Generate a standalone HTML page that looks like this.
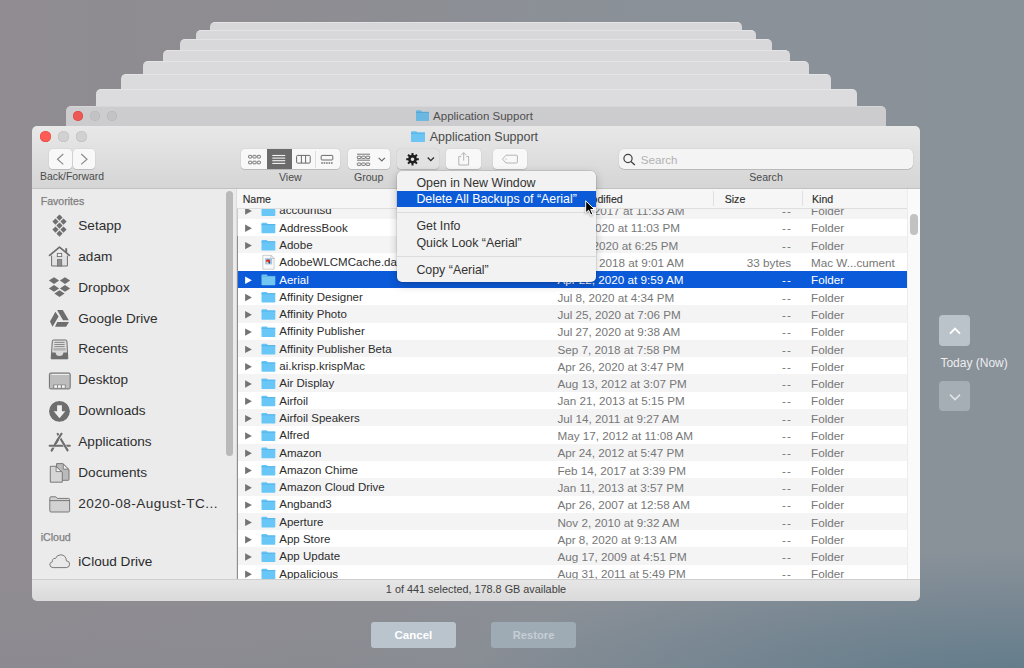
<!DOCTYPE html><html><head><meta charset="utf-8"><style>
*{box-sizing:border-box;margin:0;padding:0}
html,body{width:1024px;height:668px;overflow:hidden}
body{position:relative;font-family:"Liberation Sans",sans-serif;
background:linear-gradient(90deg,#908c91 0%,#8e8d92 30%,#8b9097 55%,#8a9199 75%,#899199 100%);}
.a{position:absolute}
.t{position:absolute;line-height:1;white-space:nowrap}
svg{overflow:visible}
.layer{position:absolute;border-radius:5px 5px 0 0;height:130px;border-top:1px solid #e4e4e6}
.tl{position:absolute;border-radius:50%}
.btn{position:absolute;background:#f8f8f8;border-radius:3.5px;box-shadow:0 0.5px 0.5px rgba(0,0,0,.25),0 0 0 0.5px rgba(0,0,0,.06)}
</style></head><body>
<div class="a" style="left:0;top:0;width:1024px;height:668px;background:radial-gradient(ellipse 560px 140px at 1024px 690px,rgba(88,118,135,.85),rgba(88,118,135,0)),linear-gradient(180deg,rgba(120,130,140,0) 580px,rgba(110,125,138,.12) 668px)"></div>
<div class="layer" style="left:210px;top:22px;width:532px;background:#d7d7d9"></div>
<div class="layer" style="left:196px;top:30px;width:560px;background:#d8d8da"></div>
<div class="layer" style="left:180px;top:39px;width:592px;background:#d8d8da"></div>
<div class="layer" style="left:163px;top:49.5px;width:627px;background:#d9d9db"></div>
<div class="layer" style="left:143px;top:61px;width:666px;background:#dadadc"></div>
<div class="layer" style="left:121px;top:74px;width:710px;background:#dbdbdd"></div>
<div class="layer" style="left:96px;top:89px;width:761px;background:#dcdcde"></div>
<div class="layer" style="left:66px;top:106px;width:820px;background:linear-gradient(#cdcdcf,#c6c6c8);border-top:1px solid #d6d6d8"></div>
<div class="tl" style="left:73.0px;top:110.5px;width:10px;height:10px;background:#ec5853;box-shadow:inset 0 0 0 0.5px #d9443f"></div>
<div class="tl" style="left:90.0px;top:110.5px;width:10px;height:10px;background:#c3c3c5;box-shadow:inset 0 0 0 0.5px #b5b5b7"></div>
<div class="tl" style="left:107.0px;top:110.5px;width:10px;height:10px;background:#c3c3c5;box-shadow:inset 0 0 0 0.5px #b5b5b7"></div>
<svg class="a" style="left:400px;top:100px" width="40" height="50" viewBox="400 100 40 50"><path d="M416,111.89999999999999 Q416,110.6 416.9,110.6 H420.94 L422.04,111.89999999999999 H428.4 Q429,111.89999999999999 429,112.6 V120.1 Q429,120.8 428.3,120.8 H416.7 Q416,120.8 416,120.1 Z" fill="#6ab8e2"/><rect x="416" y="111.89999999999999" width="13" height="1.1" fill="#5aa7d4"/><path d="M411,132.60000000000002 Q411,131.3 411.9,131.3 H416.32 L417.42,132.60000000000002 H424.4 Q425,132.60000000000002 425,133.3 V141.20000000000002 Q425,141.9 424.3,141.9 H411.7 Q411,141.9 411,141.20000000000002 Z" fill="#6cc5f3"/><rect x="411" y="132.60000000000002" width="14" height="1.1" fill="#58b3e6"/></svg>
<div class="a" style="left:32.00px;top:126.00px;width:888.00px;height:62.00px;border-radius:5px 5px 0 0;background:linear-gradient(#e8e8e8,#d5d5d5);"></div>
<div class="a" style="left:32.00px;top:187.50px;width:888.00px;height:1.00px;background:#c2c2c2;"></div>
<div class="tl" style="left:39.5px;top:131.0px;width:11px;height:11px;background:#fd5d56;box-shadow:inset 0 0 0 0.5px #e2463f"></div>
<div class="tl" style="left:57.5px;top:131.0px;width:11px;height:11px;background:#d1d1d1;box-shadow:inset 0 0 0 0.5px #bdbdbd"></div>
<div class="tl" style="left:75.5px;top:131.0px;width:11px;height:11px;background:#d1d1d1;box-shadow:inset 0 0 0 0.5px #bdbdbd"></div>
<div class="t" style="left:429.70px;top:131.22px;font-size:12.5px;color:#4a4a4a;">Application Support</div>
<div class="t" style="left:433.10px;top:111.16px;font-size:11.5px;color:#4e4e4e;">Application Support</div>
<svg class="a" style="left:400px;top:100px" width="40" height="50" viewBox="400 100 40 50"><path d="M416,111.89999999999999 Q416,110.6 416.9,110.6 H420.94 L422.04,111.89999999999999 H428.4 Q429,111.89999999999999 429,112.6 V120.1 Q429,120.8 428.3,120.8 H416.7 Q416,120.8 416,120.1 Z" fill="#6ab8e2"/><rect x="416" y="111.89999999999999" width="13" height="1.1" fill="#5aa7d4"/><path d="M411,132.60000000000002 Q411,131.3 411.9,131.3 H416.32 L417.42,132.60000000000002 H424.4 Q425,132.60000000000002 425,133.3 V141.20000000000002 Q425,141.9 424.3,141.9 H411.7 Q411,141.9 411,141.20000000000002 Z" fill="#6cc5f3"/><rect x="411" y="132.60000000000002" width="14" height="1.1" fill="#58b3e6"/></svg>
<div class="btn" style="left:49.2px;top:149.3px;width:22.4px;height:19.8px"></div>
<div class="btn" style="left:73.1px;top:149.3px;width:21.9px;height:19.8px"></div>
<div class="t" style="left:40.00px;top:172.29px;font-size:10.4px;color:#4b4b4b;">Back/Forward</div>
<div class="btn" style="left:241px;top:149.2px;width:99.4px;height:20px"></div>
<div class="a" style="left:267.20px;top:149.20px;width:24.40px;height:20.00px;background:#6b6b6b;"></div>
<div class="a" style="left:315.20px;top:150.50px;width:0.60px;height:17.50px;background:#dedede;"></div>
<div class="t" style="left:90.40px;width:400px;text-align:center;top:172.02px;font-size:10.6px;color:#4b4b4b;">View</div>
<div class="btn" style="left:348px;top:149.2px;width:41.9px;height:19.8px"></div>
<div class="t" style="left:168.70px;width:400px;text-align:center;top:172.02px;font-size:10.6px;color:#4b4b4b;">Group</div>
<div class="btn" style="left:397.3px;top:149.2px;width:41.7px;height:19.8px;background:#e2e2e2"></div>
<div class="btn" style="left:446.3px;top:149.4px;width:34.5px;height:19.5px"></div>
<div class="btn" style="left:492.9px;top:149.4px;width:34px;height:19.5px"></div>
<div class="btn" style="left:618.7px;top:149.3px;width:294.3px;height:20px;border-radius:5px;background:#f4f4f4"></div>
<div class="t" style="left:640.80px;top:153.78px;font-size:11.6px;color:#b2b2b2;">Search</div>
<div class="t" style="left:566.00px;width:400px;text-align:center;top:172.02px;font-size:10.6px;color:#4b4b4b;">Search</div>
<svg class="a" style="left:40px;top:145px" width="600" height="30" viewBox="40 145 600 30"><path d="M63.3,154 L57.5,159.2 L63.3,164.4" fill="none" stroke="#8c8c8c" stroke-width="1.2"/><path d="M81.2,154 L87,159.2 L81.2,164.4" fill="none" stroke="#8c8c8c" stroke-width="1.2"/><rect x="248.60" y="155.40" width="3.2" height="2.6" rx="0.6" fill="none" stroke="#6a6a6a" stroke-width="0.9"/><rect x="252.90" y="155.40" width="3.2" height="2.6" rx="0.6" fill="none" stroke="#6a6a6a" stroke-width="0.9"/><rect x="257.20" y="155.40" width="3.2" height="2.6" rx="0.6" fill="none" stroke="#6a6a6a" stroke-width="0.9"/><rect x="248.60" y="161.20" width="3.2" height="2.6" rx="0.6" fill="none" stroke="#6a6a6a" stroke-width="0.9"/><rect x="252.90" y="161.20" width="3.2" height="2.6" rx="0.6" fill="none" stroke="#6a6a6a" stroke-width="0.9"/><rect x="257.20" y="161.20" width="3.2" height="2.6" rx="0.6" fill="none" stroke="#6a6a6a" stroke-width="0.9"/><rect x="272.3" y="154.95" width="12.9" height="1.1" fill="#f4f4f4"/><rect x="272.3" y="157.55" width="12.9" height="1.1" fill="#f4f4f4"/><rect x="272.3" y="160.15" width="12.9" height="1.1" fill="#f4f4f4"/><rect x="272.3" y="162.85" width="12.9" height="1.1" fill="#f4f4f4"/><rect x="296.6" y="155.4" width="13.6" height="7.7" rx="1" fill="none" stroke="#6a6a6a" stroke-width="1"/><path d="M301.4,155.4 V163.1 M305.6,155.4 V163.1" stroke="#6a6a6a" stroke-width="1"/><rect x="321.2" y="155.4" width="11.6" height="4.6" rx="0.8" fill="none" stroke="#6a6a6a" stroke-width="1"/><rect x="321.20" y="162.3" width="1.6" height="1.4" fill="#6a6a6a"/><rect x="323.65" y="162.3" width="1.6" height="1.4" fill="#6a6a6a"/><rect x="326.10" y="162.3" width="1.6" height="1.4" fill="#6a6a6a"/><rect x="328.55" y="162.3" width="1.6" height="1.4" fill="#6a6a6a"/><rect x="331.00" y="162.3" width="1.6" height="1.4" fill="#6a6a6a"/><path d="M357,154.2 H370 M357,160.2 H370" stroke="#6a6a6a" stroke-width="0.9"/><rect x="357.30" y="156.20" width="3.6" height="2.4" rx="0.6" fill="none" stroke="#6a6a6a" stroke-width="0.9"/><rect x="361.70" y="156.20" width="3.6" height="2.4" rx="0.6" fill="none" stroke="#6a6a6a" stroke-width="0.9"/><rect x="366.10" y="156.20" width="3.6" height="2.4" rx="0.6" fill="none" stroke="#6a6a6a" stroke-width="0.9"/><rect x="357.30" y="163.00" width="3.6" height="2.4" rx="0.6" fill="none" stroke="#6a6a6a" stroke-width="0.9"/><rect x="361.70" y="163.00" width="3.6" height="2.4" rx="0.6" fill="none" stroke="#6a6a6a" stroke-width="0.9"/><rect x="366.10" y="163.00" width="3.6" height="2.4" rx="0.6" fill="none" stroke="#6a6a6a" stroke-width="0.9"/><path d="M378.7,157.9 L381.8,161 L384.9,157.9" fill="none" stroke="#6a6a6a" stroke-width="1.2"/><path d="M415.50,159.20 L418.80,159.20 M414.62,161.32 L416.95,163.65 M412.50,162.20 L412.50,165.50 M410.38,161.32 L408.05,163.65 M409.50,159.20 L406.20,159.20 M410.38,157.08 L408.05,154.75 M412.50,156.20 L412.50,152.90 M414.62,157.08 L416.95,154.75 " stroke="#1f1f1f" stroke-width="2.0"/><circle cx="412.5" cy="159.2" r="3.1" fill="none" stroke="#1f1f1f" stroke-width="2.6"/><path d="M427.7,157.5 L430.8,160.6 L433.9,157.5" fill="none" stroke="#2a2a2a" stroke-width="1.3"/><path d="M461.2,156.4 H458.8 V165 H468.6 V156.4 H466.2" fill="none" stroke="#b4b4b4" stroke-width="1"/><path d="M463.7,152.6 V160.6 M461.3,155 L463.7,152.6 L466.1,155" fill="none" stroke="#b4b4b4" stroke-width="1"/><path d="M506,155.2 H516.6 Q517.4,155.2 517.4,156 V162.2 Q517.4,163 516.6,163 H506 L502.5,159.1 Z" fill="none" stroke="#b4b4b4" stroke-width="1"/><circle cx="506" cy="159.1" r="0.7" fill="#b4b4b4"/><circle cx="628" cy="158.5" r="4.1" fill="none" stroke="#404040" stroke-width="1.2"/><path d="M631,161.6 L634.8,165" stroke="#404040" stroke-width="1.3"/></svg>
<div class="a" style="left:32.00px;top:188.50px;width:205.00px;height:390.50px;background:#ebebeb;"></div>
<div class="a" style="left:236.00px;top:188.50px;width:1.00px;height:390.50px;background:#dcdcdc;"></div>
<div class="a" style="left:225.80px;top:191.40px;width:7.00px;height:264.60px;background:#b9b9b9;border-radius:4px;"></div>
<div class="t" style="left:40.70px;top:196.42px;font-size:10.6px;color:#7f7f7f;-webkit-text-stroke:0.25px #7f7f7f;">Favorites</div>
<div class="t" style="left:78.30px;top:218.78px;font-size:13.6px;color:#2e2e2e;">Setapp</div>
<div class="t" style="left:78.30px;top:249.70px;font-size:13.6px;color:#2e2e2e;">adam</div>
<div class="t" style="left:78.30px;top:280.62px;font-size:13.6px;color:#2e2e2e;">Dropbox</div>
<div class="t" style="left:78.30px;top:311.54px;font-size:13.6px;color:#2e2e2e;">Google Drive</div>
<div class="t" style="left:78.30px;top:342.46px;font-size:13.6px;color:#2e2e2e;">Recents</div>
<div class="t" style="left:78.30px;top:373.38px;font-size:13.6px;color:#2e2e2e;">Desktop</div>
<div class="t" style="left:78.30px;top:404.30px;font-size:13.6px;color:#2e2e2e;">Downloads</div>
<div class="t" style="left:78.30px;top:435.22px;font-size:13.6px;color:#2e2e2e;">Applications</div>
<div class="t" style="left:78.30px;top:466.14px;font-size:13.6px;color:#2e2e2e;">Documents</div>
<div class="t" style="left:78.30px;top:497.06px;font-size:13.6px;color:#2e2e2e;letter-spacing:0.45px;">2020-08-August-TC...</div>
<div class="t" style="left:40.70px;top:532.22px;font-size:10.6px;color:#7f7f7f;-webkit-text-stroke:0.25px #7f7f7f;">iCloud</div>
<div class="t" style="left:78.30px;top:554.68px;font-size:13.6px;color:#2a2a2a;">iCloud Drive</div>
<svg class="a" style="left:40px;top:200px" width="40" height="380" viewBox="40 200 40 380"><path d="M59.5,214.5 L62.6,217.6 L59.5,220.7 L56.4,217.6 Z" fill="#6e6e6e"/><path d="M55.5,218.5 L58.6,221.6 L55.5,224.7 L52.4,221.6 Z" fill="#6e6e6e"/><path d="M63.5,218.5 L66.6,221.6 L63.5,224.7 L60.4,221.6 Z" fill="#6e6e6e"/><path d="M59.5,222.5 L62.6,225.6 L59.5,228.7 L56.4,225.6 Z" fill="#6e6e6e"/><path d="M55.5,226.5 L58.6,229.6 L55.5,232.7 L52.4,229.6 Z" fill="#6e6e6e"/><path d="M63.5,226.5 L66.6,229.6 L63.5,232.7 L60.4,229.6 Z" fill="#6e6e6e"/><path d="M59.5,230.5 L62.6,233.6 L59.5,236.7 L56.4,233.6 Z" fill="#6e6e6e"/><path d="M51.6,255.6 V266 H67.4 V255.6" fill="#e2e2e2" stroke="#6e6e6e" stroke-width="1"/><path d="M49.6,255.4 L59.5,247.2 L69.4,255.4" fill="none" stroke="#6e6e6e" stroke-width="1.7" stroke-linejoin="round" stroke-linecap="round"/><path d="M66.2,248.2 V252.4" stroke="#6e6e6e" stroke-width="1.9"/><rect x="57.4" y="259.6" width="4.3" height="6.4" fill="#8e8e8e" stroke="#6e6e6e" stroke-width="0.8"/><rect x="57.3" y="253.4" width="4.4" height="3.2" fill="#f2f2f2" stroke="#6e6e6e" stroke-width="0.9"/><path d="M54.0,277.20000000000005 L59.1,280.6 L54.0,284.0 L48.9,280.6 Z" fill="#6e6e6e"/><path d="M65.0,277.20000000000005 L70.1,280.6 L65.0,284.0 L59.9,280.6 Z" fill="#6e6e6e"/><path d="M54.0,285.0 L59.1,288.4 L54.0,291.79999999999995 L48.9,288.4 Z" fill="#6e6e6e"/><path d="M65.0,285.0 L70.1,288.4 L65.0,291.79999999999995 L59.9,288.4 Z" fill="#6e6e6e"/><path d="M59.5,290.20000000000005 L64.6,293.6 L59.5,297.0 L54.4,293.6 Z" fill="#6e6e6e"/><path d="M57.1,309.9 H62.8 L68.8,320.3 H63 Z" fill="#6e6e6e"/><path d="M55.4,311.75 L58.6,316.6 L52.5,326.8 L50,321.6 Z" fill="#6e6e6e"/><path d="M57.3,322 H69 L66.1,326.8 H55 Z" fill="#6e6e6e"/><path d="M53.4,340 H65.8 Q66.8,340 66.9,341 L67.8,358.8 H51.2 L52.3,341 Q52.4,340 53.4,340 Z" fill="#dcdcdc" stroke="#6e6e6e" stroke-width="1"/><path d="M54.4,342.4 H64.6" stroke="#6e6e6e" stroke-width="0.75"/><path d="M54.4,344.5 H64.6" stroke="#6e6e6e" stroke-width="0.75"/><path d="M54.4,346.6 H64.6" stroke="#6e6e6e" stroke-width="0.75"/><rect x="53.4" y="348" width="12.2" height="2.6" fill="#b4b4b4"/><path d="M51.2,352.5 H55.6 Q55.9,356.1 59.5,356.1 Q63.1,356.1 63.4,352.5 H67.8 V358.2 Q67.8,359 67,359 H52 Q51.2,359 51.2,358.2 Z" fill="#6e6e6e"/><rect x="49.4" y="373" width="20.8" height="15.9" rx="1.3" fill="#bdbdbd" stroke="#6e6e6e" stroke-width="1"/><path d="M51.8,374.5 H69" stroke="#f4f4f4" stroke-width="0.9"/><rect x="53" y="384.5" width="12.8" height="3.9" fill="#8a8a8a"/><rect x="54.2" y="385.3" width="2.8" height="2.5" fill="#f6f6f6"/><rect x="58" y="385.3" width="2.8" height="2.5" fill="#f6f6f6"/><rect x="62" y="385.3" width="2.8" height="2.5" fill="#f6f6f6"/><circle cx="59.45" cy="411.3" r="10.4" fill="#6e6e6e"/><path d="M57.1,405.2 H61.9 V411.3 H65.3 L59.5,418.2 L53.7,411.3 H57.1 Z" fill="#efefef"/><path d="M61.4,433.8 L51.6,450.6" stroke="#6e6e6e" stroke-width="2.1" stroke-linecap="round"/><path d="M49.6,445.8 H69.8" stroke="#ebebeb" stroke-width="3.6"/><path d="M49.6,445.8 H69.8" stroke="#6e6e6e" stroke-width="2.0" stroke-linecap="round"/><path d="M59.6,437.2 L67.6,450.4" stroke="#ebebeb" stroke-width="3.0"/><path d="M57.6,433.8 L67.6,450.4" stroke="#6e6e6e" stroke-width="2.1" stroke-linecap="round"/><path d="M61.4,433.8 L58.2,439" stroke="#ebebeb" stroke-width="3.4"/><path d="M61.4,433.8 L57.6,440.0" stroke="#6e6e6e" stroke-width="2.1" stroke-linecap="round"/><path d="M57.6,440.0 L54.6,445.0" stroke="#6e6e6e" stroke-width="2.1"/><path d="M56.6,463.6 H62.9 L69,469.6 V479.6 Q69,480.3 68.3,480.3 H56.6 Z" fill="#bababa" stroke="#6e6e6e" stroke-width="0.9"/><path d="M63.3,464.2 V469.1 H68.4 Z" fill="#f2f2f2" stroke="#6e6e6e" stroke-width="0.8"/><path d="M50.3,466.3 H56.1 L62.3,472.2 V482.2 H50.3 Z" fill="#d6d6d6" stroke="#6e6e6e" stroke-width="0.9"/><path d="M56.1,466.8 V471.6 H61.8 Z" fill="#f2f2f2" stroke="#6e6e6e" stroke-width="0.8"/><path d="M49.8,498.2 Q49.8,496.8 51,496.8 H55.8 L57.2,498.4 H68.4 Q69.6,498.4 69.6,499.6 V510.8 Q69.6,512 68.4,512 H51 Q49.8,512 49.8,510.8 Z" fill="#d2d2d2" stroke="#6e6e6e" stroke-width="0.9"/><path d="M49.8,500.6 H69.6" stroke="#6e6e6e" stroke-width="0.9"/><path d="M53.2,567.6 H66.2 Q69.6,567.6 69.6,564.2 Q69.6,561 66.4,560.8 Q66,555 60.8,554.8 Q56.8,554.8 55.6,558.4 Q53.6,557.8 52.6,559.8 Q52.2,560.6 52.6,561.6 Q49.6,562.4 49.8,564.8 Q50.2,567.6 53.2,567.6 Z" fill="#e9e9e9" stroke="#6e6e6e" stroke-width="0.9"/></svg>
<div class="a" style="left:237.50px;top:188.50px;width:682.50px;height:390.50px;background:#ffffff;"></div>
<div class="a" style="left:237.5px;top:208px;width:670px;height:371px;overflow:hidden">
<div class="a" style="left:0;top:-6.60px;width:669px;height:17.60px;background:#f4f4f5"></div>
<div class="t" style="left:41.80px;top:-2.64px;font-size:11.5px;color:#2c2c2c;">accountsd</div>
<div class="t" style="left:319.90px;top:-2.81px;font-size:11.7px;color:#777777;">Mar 8, 2017 at 11:33 AM</div>
<div class="t" style="left:153.50px;width:400px;text-align:right;top:-2.81px;font-size:11.7px;color:#777777;letter-spacing:1.2px;margin-left:1.2px;">--</div>
<div class="t" style="left:573.50px;top:-2.81px;font-size:11.7px;color:#777777;">Folder</div>
<div class="a" style="left:0;top:10.70px;width:669px;height:17.60px;background:#ffffff"></div>
<div class="t" style="left:41.80px;top:14.66px;font-size:11.5px;color:#2c2c2c;">AddressBook</div>
<div class="t" style="left:319.90px;top:14.49px;font-size:11.7px;color:#777777;">Jul 1, 2020 at 11:03 PM</div>
<div class="t" style="left:153.50px;width:400px;text-align:right;top:14.49px;font-size:11.7px;color:#777777;letter-spacing:1.2px;margin-left:1.2px;">--</div>
<div class="t" style="left:573.50px;top:14.49px;font-size:11.7px;color:#777777;">Folder</div>
<div class="a" style="left:0;top:28.00px;width:669px;height:17.60px;background:#f4f4f5"></div>
<div class="t" style="left:41.80px;top:31.96px;font-size:11.5px;color:#2c2c2c;">Adobe</div>
<div class="t" style="left:319.90px;top:31.79px;font-size:11.7px;color:#777777;">Jun 2, 2020 at 6:25 PM</div>
<div class="t" style="left:153.50px;width:400px;text-align:right;top:31.79px;font-size:11.7px;color:#777777;letter-spacing:1.2px;margin-left:1.2px;">--</div>
<div class="t" style="left:573.50px;top:31.79px;font-size:11.7px;color:#777777;">Folder</div>
<div class="a" style="left:0;top:45.30px;width:669px;height:17.60px;background:#ffffff"></div>
<div class="t" style="left:41.80px;top:49.26px;font-size:11.5px;color:#2c2c2c;">AdobeWLCMCache.dat</div>
<div class="t" style="left:319.90px;top:49.09px;font-size:11.7px;color:#777777;">Jan 22, 2018 at 9:01 AM</div>
<div class="t" style="left:153.50px;width:400px;text-align:right;top:49.09px;font-size:11.7px;color:#777777;">33 bytes</div>
<div class="t" style="left:573.50px;top:49.09px;font-size:11.7px;color:#777777;">Mac W...cument</div>
<div class="a" style="left:0;top:62.60px;width:669px;height:17.60px;background:#0b5ad9"></div>
<div class="t" style="left:41.80px;top:66.56px;font-size:11.5px;color:#ffffff;">Aerial</div>
<div class="t" style="left:319.90px;top:66.39px;font-size:11.7px;color:#ffffff;">Apr 22, 2020 at 9:59 AM</div>
<div class="t" style="left:153.50px;width:400px;text-align:right;top:66.39px;font-size:11.7px;color:#ffffff;letter-spacing:1.2px;margin-left:1.2px;">--</div>
<div class="t" style="left:573.50px;top:66.39px;font-size:11.7px;color:#ffffff;">Folder</div>
<div class="a" style="left:0;top:79.90px;width:669px;height:17.60px;background:#ffffff"></div>
<div class="t" style="left:41.80px;top:83.86px;font-size:11.5px;color:#2c2c2c;">Affinity Designer</div>
<div class="t" style="left:319.90px;top:83.69px;font-size:11.7px;color:#777777;">Jul 8, 2020 at 4:34 PM</div>
<div class="t" style="left:153.50px;width:400px;text-align:right;top:83.69px;font-size:11.7px;color:#777777;letter-spacing:1.2px;margin-left:1.2px;">--</div>
<div class="t" style="left:573.50px;top:83.69px;font-size:11.7px;color:#777777;">Folder</div>
<div class="a" style="left:0;top:97.20px;width:669px;height:17.60px;background:#f4f4f5"></div>
<div class="t" style="left:41.80px;top:101.16px;font-size:11.5px;color:#2c2c2c;">Affinity Photo</div>
<div class="t" style="left:319.90px;top:100.99px;font-size:11.7px;color:#777777;">Jul 25, 2020 at 7:06 PM</div>
<div class="t" style="left:153.50px;width:400px;text-align:right;top:100.99px;font-size:11.7px;color:#777777;letter-spacing:1.2px;margin-left:1.2px;">--</div>
<div class="t" style="left:573.50px;top:100.99px;font-size:11.7px;color:#777777;">Folder</div>
<div class="a" style="left:0;top:114.50px;width:669px;height:17.60px;background:#ffffff"></div>
<div class="t" style="left:41.80px;top:118.46px;font-size:11.5px;color:#2c2c2c;">Affinity Publisher</div>
<div class="t" style="left:319.90px;top:118.29px;font-size:11.7px;color:#777777;">Jul 27, 2020 at 9:38 AM</div>
<div class="t" style="left:153.50px;width:400px;text-align:right;top:118.29px;font-size:11.7px;color:#777777;letter-spacing:1.2px;margin-left:1.2px;">--</div>
<div class="t" style="left:573.50px;top:118.29px;font-size:11.7px;color:#777777;">Folder</div>
<div class="a" style="left:0;top:131.80px;width:669px;height:17.60px;background:#f4f4f5"></div>
<div class="t" style="left:41.80px;top:135.76px;font-size:11.5px;color:#2c2c2c;">Affinity Publisher Beta</div>
<div class="t" style="left:319.90px;top:135.59px;font-size:11.7px;color:#777777;">Sep 7, 2018 at 7:58 PM</div>
<div class="t" style="left:153.50px;width:400px;text-align:right;top:135.59px;font-size:11.7px;color:#777777;letter-spacing:1.2px;margin-left:1.2px;">--</div>
<div class="t" style="left:573.50px;top:135.59px;font-size:11.7px;color:#777777;">Folder</div>
<div class="a" style="left:0;top:149.10px;width:669px;height:17.60px;background:#ffffff"></div>
<div class="t" style="left:41.80px;top:153.06px;font-size:11.5px;color:#2c2c2c;">ai.krisp.krispMac</div>
<div class="t" style="left:319.90px;top:152.89px;font-size:11.7px;color:#777777;">Apr 26, 2020 at 3:47 PM</div>
<div class="t" style="left:153.50px;width:400px;text-align:right;top:152.89px;font-size:11.7px;color:#777777;letter-spacing:1.2px;margin-left:1.2px;">--</div>
<div class="t" style="left:573.50px;top:152.89px;font-size:11.7px;color:#777777;">Folder</div>
<div class="a" style="left:0;top:166.40px;width:669px;height:17.60px;background:#f4f4f5"></div>
<div class="t" style="left:41.80px;top:170.36px;font-size:11.5px;color:#2c2c2c;">Air Display</div>
<div class="t" style="left:319.90px;top:170.19px;font-size:11.7px;color:#777777;">Aug 13, 2012 at 3:07 PM</div>
<div class="t" style="left:153.50px;width:400px;text-align:right;top:170.19px;font-size:11.7px;color:#777777;letter-spacing:1.2px;margin-left:1.2px;">--</div>
<div class="t" style="left:573.50px;top:170.19px;font-size:11.7px;color:#777777;">Folder</div>
<div class="a" style="left:0;top:183.70px;width:669px;height:17.60px;background:#ffffff"></div>
<div class="t" style="left:41.80px;top:187.66px;font-size:11.5px;color:#2c2c2c;">Airfoil</div>
<div class="t" style="left:319.90px;top:187.49px;font-size:11.7px;color:#777777;">Jan 21, 2013 at 5:15 PM</div>
<div class="t" style="left:153.50px;width:400px;text-align:right;top:187.49px;font-size:11.7px;color:#777777;letter-spacing:1.2px;margin-left:1.2px;">--</div>
<div class="t" style="left:573.50px;top:187.49px;font-size:11.7px;color:#777777;">Folder</div>
<div class="a" style="left:0;top:201.00px;width:669px;height:17.60px;background:#f4f4f5"></div>
<div class="t" style="left:41.80px;top:204.96px;font-size:11.5px;color:#2c2c2c;">Airfoil Speakers</div>
<div class="t" style="left:319.90px;top:204.79px;font-size:11.7px;color:#777777;">Jul 14, 2011 at 9:27 AM</div>
<div class="t" style="left:153.50px;width:400px;text-align:right;top:204.79px;font-size:11.7px;color:#777777;letter-spacing:1.2px;margin-left:1.2px;">--</div>
<div class="t" style="left:573.50px;top:204.79px;font-size:11.7px;color:#777777;">Folder</div>
<div class="a" style="left:0;top:218.30px;width:669px;height:17.60px;background:#ffffff"></div>
<div class="t" style="left:41.80px;top:222.26px;font-size:11.5px;color:#2c2c2c;">Alfred</div>
<div class="t" style="left:319.90px;top:222.09px;font-size:11.7px;color:#777777;">May 17, 2012 at 11:08 AM</div>
<div class="t" style="left:153.50px;width:400px;text-align:right;top:222.09px;font-size:11.7px;color:#777777;letter-spacing:1.2px;margin-left:1.2px;">--</div>
<div class="t" style="left:573.50px;top:222.09px;font-size:11.7px;color:#777777;">Folder</div>
<div class="a" style="left:0;top:235.60px;width:669px;height:17.60px;background:#f4f4f5"></div>
<div class="t" style="left:41.80px;top:239.56px;font-size:11.5px;color:#2c2c2c;">Amazon</div>
<div class="t" style="left:319.90px;top:239.39px;font-size:11.7px;color:#777777;">Apr 24, 2012 at 5:47 PM</div>
<div class="t" style="left:153.50px;width:400px;text-align:right;top:239.39px;font-size:11.7px;color:#777777;letter-spacing:1.2px;margin-left:1.2px;">--</div>
<div class="t" style="left:573.50px;top:239.39px;font-size:11.7px;color:#777777;">Folder</div>
<div class="a" style="left:0;top:252.90px;width:669px;height:17.60px;background:#ffffff"></div>
<div class="t" style="left:41.80px;top:256.86px;font-size:11.5px;color:#2c2c2c;">Amazon Chime</div>
<div class="t" style="left:319.90px;top:256.69px;font-size:11.7px;color:#777777;">Feb 14, 2017 at 3:39 PM</div>
<div class="t" style="left:153.50px;width:400px;text-align:right;top:256.69px;font-size:11.7px;color:#777777;letter-spacing:1.2px;margin-left:1.2px;">--</div>
<div class="t" style="left:573.50px;top:256.69px;font-size:11.7px;color:#777777;">Folder</div>
<div class="a" style="left:0;top:270.20px;width:669px;height:17.60px;background:#f4f4f5"></div>
<div class="t" style="left:41.80px;top:274.16px;font-size:11.5px;color:#2c2c2c;">Amazon Cloud Drive</div>
<div class="t" style="left:319.90px;top:273.99px;font-size:11.7px;color:#777777;">Jan 11, 2013 at 3:57 PM</div>
<div class="t" style="left:153.50px;width:400px;text-align:right;top:273.99px;font-size:11.7px;color:#777777;letter-spacing:1.2px;margin-left:1.2px;">--</div>
<div class="t" style="left:573.50px;top:273.99px;font-size:11.7px;color:#777777;">Folder</div>
<div class="a" style="left:0;top:287.50px;width:669px;height:17.60px;background:#ffffff"></div>
<div class="t" style="left:41.80px;top:291.46px;font-size:11.5px;color:#2c2c2c;">Angband3</div>
<div class="t" style="left:319.90px;top:291.29px;font-size:11.7px;color:#777777;">Apr 26, 2007 at 12:58 AM</div>
<div class="t" style="left:153.50px;width:400px;text-align:right;top:291.29px;font-size:11.7px;color:#777777;letter-spacing:1.2px;margin-left:1.2px;">--</div>
<div class="t" style="left:573.50px;top:291.29px;font-size:11.7px;color:#777777;">Folder</div>
<div class="a" style="left:0;top:304.80px;width:669px;height:17.60px;background:#f4f4f5"></div>
<div class="t" style="left:41.80px;top:308.76px;font-size:11.5px;color:#2c2c2c;">Aperture</div>
<div class="t" style="left:319.90px;top:308.59px;font-size:11.7px;color:#777777;">Nov 2, 2010 at 9:32 AM</div>
<div class="t" style="left:153.50px;width:400px;text-align:right;top:308.59px;font-size:11.7px;color:#777777;letter-spacing:1.2px;margin-left:1.2px;">--</div>
<div class="t" style="left:573.50px;top:308.59px;font-size:11.7px;color:#777777;">Folder</div>
<div class="a" style="left:0;top:322.10px;width:669px;height:17.60px;background:#ffffff"></div>
<div class="t" style="left:41.80px;top:326.06px;font-size:11.5px;color:#2c2c2c;">App Store</div>
<div class="t" style="left:319.90px;top:325.89px;font-size:11.7px;color:#777777;">Apr 8, 2020 at 9:13 AM</div>
<div class="t" style="left:153.50px;width:400px;text-align:right;top:325.89px;font-size:11.7px;color:#777777;letter-spacing:1.2px;margin-left:1.2px;">--</div>
<div class="t" style="left:573.50px;top:325.89px;font-size:11.7px;color:#777777;">Folder</div>
<div class="a" style="left:0;top:339.40px;width:669px;height:17.60px;background:#f4f4f5"></div>
<div class="t" style="left:41.80px;top:343.36px;font-size:11.5px;color:#2c2c2c;">App Update</div>
<div class="t" style="left:319.90px;top:343.19px;font-size:11.7px;color:#777777;">Aug 17, 2009 at 4:51 PM</div>
<div class="t" style="left:153.50px;width:400px;text-align:right;top:343.19px;font-size:11.7px;color:#777777;letter-spacing:1.2px;margin-left:1.2px;">--</div>
<div class="t" style="left:573.50px;top:343.19px;font-size:11.7px;color:#777777;">Folder</div>
<div class="a" style="left:0;top:356.70px;width:669px;height:17.60px;background:#ffffff"></div>
<div class="t" style="left:41.80px;top:360.66px;font-size:11.5px;color:#2c2c2c;">Appalicious</div>
<div class="t" style="left:319.90px;top:360.49px;font-size:11.7px;color:#777777;">Aug 31, 2011 at 5:49 PM</div>
<div class="t" style="left:153.50px;width:400px;text-align:right;top:360.49px;font-size:11.7px;color:#777777;letter-spacing:1.2px;margin-left:1.2px;">--</div>
<div class="t" style="left:573.50px;top:360.49px;font-size:11.7px;color:#777777;">Folder</div>
<svg class="a" style="left:0;top:0" width="670" height="371" viewBox="237.5 208 670 371"><path d="M244.6,207.30 L251.4,211.00 L244.6,214.70 Z" fill="#737373"/><path d="M261,206.70000000000002 Q261,205.4 261.9,205.4 H266.244 L267.34400000000005,206.70000000000002 H274.2 Q274.8,206.70000000000002 274.8,207.4 V215.3 Q274.8,216.0 274.1,216.0 H261.7 Q261,216.0 261,215.3 Z" fill="#69c7f7"/><rect x="261" y="206.70000000000002" width="13.8" height="1.1" fill="#57b6eb"/><path d="M244.6,224.60 L251.4,228.30 L244.6,232.00 Z" fill="#737373"/><path d="M261,224.00000000000003 Q261,222.70000000000002 261.9,222.70000000000002 H266.244 L267.34400000000005,224.00000000000003 H274.2 Q274.8,224.00000000000003 274.8,224.70000000000002 V232.60000000000002 Q274.8,233.3 274.1,233.3 H261.7 Q261,233.3 261,232.60000000000002 Z" fill="#69c7f7"/><rect x="261" y="224.00000000000003" width="13.8" height="1.1" fill="#57b6eb"/><path d="M244.6,241.90 L251.4,245.60 L244.6,249.30 Z" fill="#737373"/><path d="M261,241.3 Q261,240.0 261.9,240.0 H266.244 L267.34400000000005,241.3 H274.2 Q274.8,241.3 274.8,242.0 V249.9 Q274.8,250.6 274.1,250.6 H261.7 Q261,250.6 261,249.9 Z" fill="#69c7f7"/><rect x="261" y="241.3" width="13.8" height="1.1" fill="#57b6eb"/><path d="M262.3,255.30 H270.4 L273.6,258.50 V269.20 H262.3 Z" fill="#fafafa" stroke="#c4c4c4" stroke-width="0.8"/><path d="M270.4,255.30 L273.6,258.50 H270.4 Z" fill="#ffffff" stroke="#9a9a9a" stroke-width="0.5"/><rect x="264.6" y="258.20" width="7" height="6.2" fill="#9cc4e6"/><ellipse cx="267.6" cy="260.90" rx="2.1" ry="1.3" fill="#d42a22"/><circle cx="267" cy="262.60" r="1.0" fill="#f0d2a0"/><circle cx="268.8" cy="262.70" r="0.8" fill="#222"/><path d="M244.6,276.50 L251.4,280.20 L244.6,283.90 Z" fill="#ffffff"/><path d="M261,275.90000000000003 Q261,274.6 261.9,274.6 H266.244 L267.34400000000005,275.90000000000003 H274.2 Q274.8,275.90000000000003 274.8,276.6 V284.50000000000006 Q274.8,285.20000000000005 274.1,285.20000000000005 H261.7 Q261,285.20000000000005 261,284.50000000000006 Z" fill="#73c6f2"/><rect x="261" y="275.90000000000003" width="13.8" height="1.1" fill="#62b4e6"/><path d="M244.6,293.80 L251.4,297.50 L244.6,301.20 Z" fill="#737373"/><path d="M261,293.2 Q261,291.9 261.9,291.9 H266.244 L267.34400000000005,293.2 H274.2 Q274.8,293.2 274.8,293.9 V301.8 Q274.8,302.5 274.1,302.5 H261.7 Q261,302.5 261,301.8 Z" fill="#69c7f7"/><rect x="261" y="293.2" width="13.8" height="1.1" fill="#57b6eb"/><path d="M244.6,311.10 L251.4,314.80 L244.6,318.50 Z" fill="#737373"/><path d="M261,310.50000000000006 Q261,309.20000000000005 261.9,309.20000000000005 H266.244 L267.34400000000005,310.50000000000006 H274.2 Q274.8,310.50000000000006 274.8,311.20000000000005 V319.1000000000001 Q274.8,319.80000000000007 274.1,319.80000000000007 H261.7 Q261,319.80000000000007 261,319.1000000000001 Z" fill="#69c7f7"/><rect x="261" y="310.50000000000006" width="13.8" height="1.1" fill="#57b6eb"/><path d="M244.6,328.40 L251.4,332.10 L244.6,335.80 Z" fill="#737373"/><path d="M261,327.8 Q261,326.5 261.9,326.5 H266.244 L267.34400000000005,327.8 H274.2 Q274.8,327.8 274.8,328.5 V336.40000000000003 Q274.8,337.1 274.1,337.1 H261.7 Q261,337.1 261,336.40000000000003 Z" fill="#69c7f7"/><rect x="261" y="327.8" width="13.8" height="1.1" fill="#57b6eb"/><path d="M244.6,345.70 L251.4,349.40 L244.6,353.10 Z" fill="#737373"/><path d="M261,345.1 Q261,343.8 261.9,343.8 H266.244 L267.34400000000005,345.1 H274.2 Q274.8,345.1 274.8,345.8 V353.70000000000005 Q274.8,354.40000000000003 274.1,354.40000000000003 H261.7 Q261,354.40000000000003 261,353.70000000000005 Z" fill="#69c7f7"/><rect x="261" y="345.1" width="13.8" height="1.1" fill="#57b6eb"/><path d="M244.6,363.00 L251.4,366.70 L244.6,370.40 Z" fill="#737373"/><path d="M261,362.40000000000003 Q261,361.1 261.9,361.1 H266.244 L267.34400000000005,362.40000000000003 H274.2 Q274.8,362.40000000000003 274.8,363.1 V371.00000000000006 Q274.8,371.70000000000005 274.1,371.70000000000005 H261.7 Q261,371.70000000000005 261,371.00000000000006 Z" fill="#69c7f7"/><rect x="261" y="362.40000000000003" width="13.8" height="1.1" fill="#57b6eb"/><path d="M244.6,380.30 L251.4,384.00 L244.6,387.70 Z" fill="#737373"/><path d="M261,379.7 Q261,378.4 261.9,378.4 H266.244 L267.34400000000005,379.7 H274.2 Q274.8,379.7 274.8,380.4 V388.3 Q274.8,389.0 274.1,389.0 H261.7 Q261,389.0 261,388.3 Z" fill="#69c7f7"/><rect x="261" y="379.7" width="13.8" height="1.1" fill="#57b6eb"/><path d="M244.6,397.60 L251.4,401.30 L244.6,405.00 Z" fill="#737373"/><path d="M261,397.00000000000006 Q261,395.70000000000005 261.9,395.70000000000005 H266.244 L267.34400000000005,397.00000000000006 H274.2 Q274.8,397.00000000000006 274.8,397.70000000000005 V405.6000000000001 Q274.8,406.30000000000007 274.1,406.30000000000007 H261.7 Q261,406.30000000000007 261,405.6000000000001 Z" fill="#69c7f7"/><rect x="261" y="397.00000000000006" width="13.8" height="1.1" fill="#57b6eb"/><path d="M244.6,414.90 L251.4,418.60 L244.6,422.30 Z" fill="#737373"/><path d="M261,414.3 Q261,413.0 261.9,413.0 H266.244 L267.34400000000005,414.3 H274.2 Q274.8,414.3 274.8,415.0 V422.90000000000003 Q274.8,423.6 274.1,423.6 H261.7 Q261,423.6 261,422.90000000000003 Z" fill="#69c7f7"/><rect x="261" y="414.3" width="13.8" height="1.1" fill="#57b6eb"/><path d="M244.6,432.20 L251.4,435.90 L244.6,439.60 Z" fill="#737373"/><path d="M261,431.6 Q261,430.3 261.9,430.3 H266.244 L267.34400000000005,431.6 H274.2 Q274.8,431.6 274.8,432.3 V440.20000000000005 Q274.8,440.90000000000003 274.1,440.90000000000003 H261.7 Q261,440.90000000000003 261,440.20000000000005 Z" fill="#69c7f7"/><rect x="261" y="431.6" width="13.8" height="1.1" fill="#57b6eb"/><path d="M244.6,449.50 L251.4,453.20 L244.6,456.90 Z" fill="#737373"/><path d="M261,448.90000000000003 Q261,447.6 261.9,447.6 H266.244 L267.34400000000005,448.90000000000003 H274.2 Q274.8,448.90000000000003 274.8,449.6 V457.50000000000006 Q274.8,458.20000000000005 274.1,458.20000000000005 H261.7 Q261,458.20000000000005 261,457.50000000000006 Z" fill="#69c7f7"/><rect x="261" y="448.90000000000003" width="13.8" height="1.1" fill="#57b6eb"/><path d="M244.6,466.80 L251.4,470.50 L244.6,474.20 Z" fill="#737373"/><path d="M261,466.2 Q261,464.9 261.9,464.9 H266.244 L267.34400000000005,466.2 H274.2 Q274.8,466.2 274.8,466.9 V474.8 Q274.8,475.5 274.1,475.5 H261.7 Q261,475.5 261,474.8 Z" fill="#69c7f7"/><rect x="261" y="466.2" width="13.8" height="1.1" fill="#57b6eb"/><path d="M244.6,484.10 L251.4,487.80 L244.6,491.50 Z" fill="#737373"/><path d="M261,483.50000000000006 Q261,482.20000000000005 261.9,482.20000000000005 H266.244 L267.34400000000005,483.50000000000006 H274.2 Q274.8,483.50000000000006 274.8,484.20000000000005 V492.1000000000001 Q274.8,492.80000000000007 274.1,492.80000000000007 H261.7 Q261,492.80000000000007 261,492.1000000000001 Z" fill="#69c7f7"/><rect x="261" y="483.50000000000006" width="13.8" height="1.1" fill="#57b6eb"/><path d="M244.6,501.40 L251.4,505.10 L244.6,508.80 Z" fill="#737373"/><path d="M261,500.8 Q261,499.5 261.9,499.5 H266.244 L267.34400000000005,500.8 H274.2 Q274.8,500.8 274.8,501.5 V509.40000000000003 Q274.8,510.1 274.1,510.1 H261.7 Q261,510.1 261,509.40000000000003 Z" fill="#69c7f7"/><rect x="261" y="500.8" width="13.8" height="1.1" fill="#57b6eb"/><path d="M244.6,518.70 L251.4,522.40 L244.6,526.10 Z" fill="#737373"/><path d="M261,518.1 Q261,516.8000000000001 261.9,516.8000000000001 H266.244 L267.34400000000005,518.1 H274.2 Q274.8,518.1 274.8,518.8000000000001 V526.7 Q274.8,527.4000000000001 274.1,527.4000000000001 H261.7 Q261,527.4000000000001 261,526.7 Z" fill="#69c7f7"/><rect x="261" y="518.1" width="13.8" height="1.1" fill="#57b6eb"/><path d="M244.6,536.00 L251.4,539.70 L244.6,543.40 Z" fill="#737373"/><path d="M261,535.4 Q261,534.1 261.9,534.1 H266.244 L267.34400000000005,535.4 H274.2 Q274.8,535.4 274.8,536.1 V544.0 Q274.8,544.7 274.1,544.7 H261.7 Q261,544.7 261,544.0 Z" fill="#69c7f7"/><rect x="261" y="535.4" width="13.8" height="1.1" fill="#57b6eb"/><path d="M244.6,553.30 L251.4,557.00 L244.6,560.70 Z" fill="#737373"/><path d="M261,552.6999999999999 Q261,551.4 261.9,551.4 H266.244 L267.34400000000005,552.6999999999999 H274.2 Q274.8,552.6999999999999 274.8,553.4 V561.3 Q274.8,562.0 274.1,562.0 H261.7 Q261,562.0 261,561.3 Z" fill="#69c7f7"/><rect x="261" y="552.6999999999999" width="13.8" height="1.1" fill="#57b6eb"/><path d="M244.6,570.60 L251.4,574.30 L244.6,578.00 Z" fill="#737373"/><path d="M261,570.0 Q261,568.7 261.9,568.7 H266.244 L267.34400000000005,570.0 H274.2 Q274.8,570.0 274.8,570.7 V578.6 Q274.8,579.3000000000001 274.1,579.3000000000001 H261.7 Q261,579.3000000000001 261,578.6 Z" fill="#69c7f7"/><rect x="261" y="570.0" width="13.8" height="1.1" fill="#57b6eb"/></svg>
</div>
<div class="a" style="left:237.00px;top:188.50px;width:669.50px;height:20.10px;background:#f6f6f6;border-bottom:1px solid #dedede;"></div>
<div class="t" style="left:242.70px;top:193.82px;font-size:10.6px;color:#2b2b2b;-webkit-text-stroke:0.12px #2b2b2b;">Name</div>
<div class="t" style="left:557.40px;top:193.82px;font-size:10.6px;color:#2b2b2b;-webkit-text-stroke:0.12px #2b2b2b;">Date Modified</div>
<div class="t" style="left:724.70px;top:193.82px;font-size:10.6px;color:#2b2b2b;-webkit-text-stroke:0.12px #2b2b2b;">Size</div>
<div class="t" style="left:812.00px;top:193.82px;font-size:10.6px;color:#2b2b2b;-webkit-text-stroke:0.12px #2b2b2b;">Kind</div>
<div class="a" style="left:553.00px;top:191.00px;width:1.00px;height:15.00px;background:#e0e0e0;"></div>
<div class="a" style="left:713.00px;top:191.00px;width:1.00px;height:15.00px;background:#e0e0e0;"></div>
<div class="a" style="left:802.00px;top:191.00px;width:1.00px;height:15.00px;background:#e0e0e0;"></div>
<div class="a" style="left:906.50px;top:188.50px;width:13.50px;height:390.50px;background:#fafafa;border-left:1px solid #ececec;"></div>
<div class="a" style="left:909.50px;top:213.50px;width:8.50px;height:21.00px;background:#c2c2c2;border-radius:4px;"></div>
<div class="a" style="left:32.00px;top:578.50px;width:888.00px;height:22.00px;border-radius:0 0 5px 5px;background:linear-gradient(#e6e6e6,#dadada);border-top:1px solid #cfcfcf;"></div>
<div class="t" style="left:276.00px;width:400px;text-align:center;top:584.41px;font-size:10.85px;color:#404040;">1 of 441 selected, 178.8 GB available</div>
<div class="a" style="left:397px;top:171px;width:199.2px;height:111px;border-radius:5px;background:#f2f2f2;box-shadow:0 3px 10px rgba(0,0,0,.22),0 0 0 0.5px rgba(0,0,0,.15)"></div>
<div class="a" style="left:397.00px;top:191.20px;width:199.20px;height:16.10px;background:#0b5bd8;"></div>
<div class="a" style="left:397.00px;top:212.20px;width:199.20px;height:1.00px;background:#dcdcdc;"></div>
<div class="a" style="left:397.00px;top:256.20px;width:199.20px;height:1.00px;background:#dcdcdc;"></div>
<div class="t" style="left:416.40px;top:176.60px;font-size:12.4px;color:#333333;">Open in New Window</div>
<div class="t" style="left:416.40px;top:193.30px;font-size:12.4px;color:#ffffff;">Delete All Backups of “Aerial”</div>
<div class="t" style="left:416.40px;top:220.10px;font-size:12.4px;color:#333333;">Get Info</div>
<div class="t" style="left:416.40px;top:236.50px;font-size:12.4px;color:#333333;">Quick Look “Aerial”</div>
<div class="t" style="left:416.40px;top:263.70px;font-size:12.4px;color:#333333;">Copy “Aerial”</div>
<svg class="a" style="left:580px;top:195px" width="20" height="25" viewBox="580 195 20 25"><path d="M585.7,200.8 V212.9 L588.6,210.2 L590.8,215.1 L592.8,214.2 L590.7,209.5 H594.5 Z" fill="#000" stroke="#fff" stroke-width="1" stroke-linejoin="round" style="filter:drop-shadow(0 1px 1px rgba(0,0,0,.3))"/></svg>
<div class="a" style="left:939.40px;top:315.10px;width:30.80px;height:31.20px;background:#bbc3ca;border-radius:4px;"></div>
<div class="t" style="left:940.40px;top:357.44px;font-size:12px;color:#eceef0;">Today (Now)</div>
<div class="a" style="left:939.40px;top:381.10px;width:30.80px;height:30.40px;background:#a5adb5;border-radius:4px;"></div>
<svg class="a" style="left:940px;top:320px" width="30" height="90" viewBox="940 320 30 90"><path d="M950,333.6 L955,328.6 L960,333.6" fill="none" stroke="#fff" stroke-width="1.9"/><path d="M950,394.6 L955,399.6 L960,394.6" fill="none" stroke="#e2e6e9" stroke-width="1.5"/></svg>
<div class="a" style="left:370.60px;top:621.50px;width:85.60px;height:26.50px;background:#bac4cd;border-radius:3px;"></div>
<div class="t" style="left:213.40px;width:400px;text-align:center;top:629.86px;font-size:11.5px;color:#ffffff;font-weight:bold;">Cancel</div>
<div class="a" style="left:491.00px;top:621.50px;width:85.30px;height:26.50px;background:#9eabb5;border-radius:3px;"></div>
<div class="t" style="left:333.60px;width:400px;text-align:center;top:630.12px;font-size:11.2px;color:#c6ced4;font-weight:bold;">Restore</div>
</body></html>
